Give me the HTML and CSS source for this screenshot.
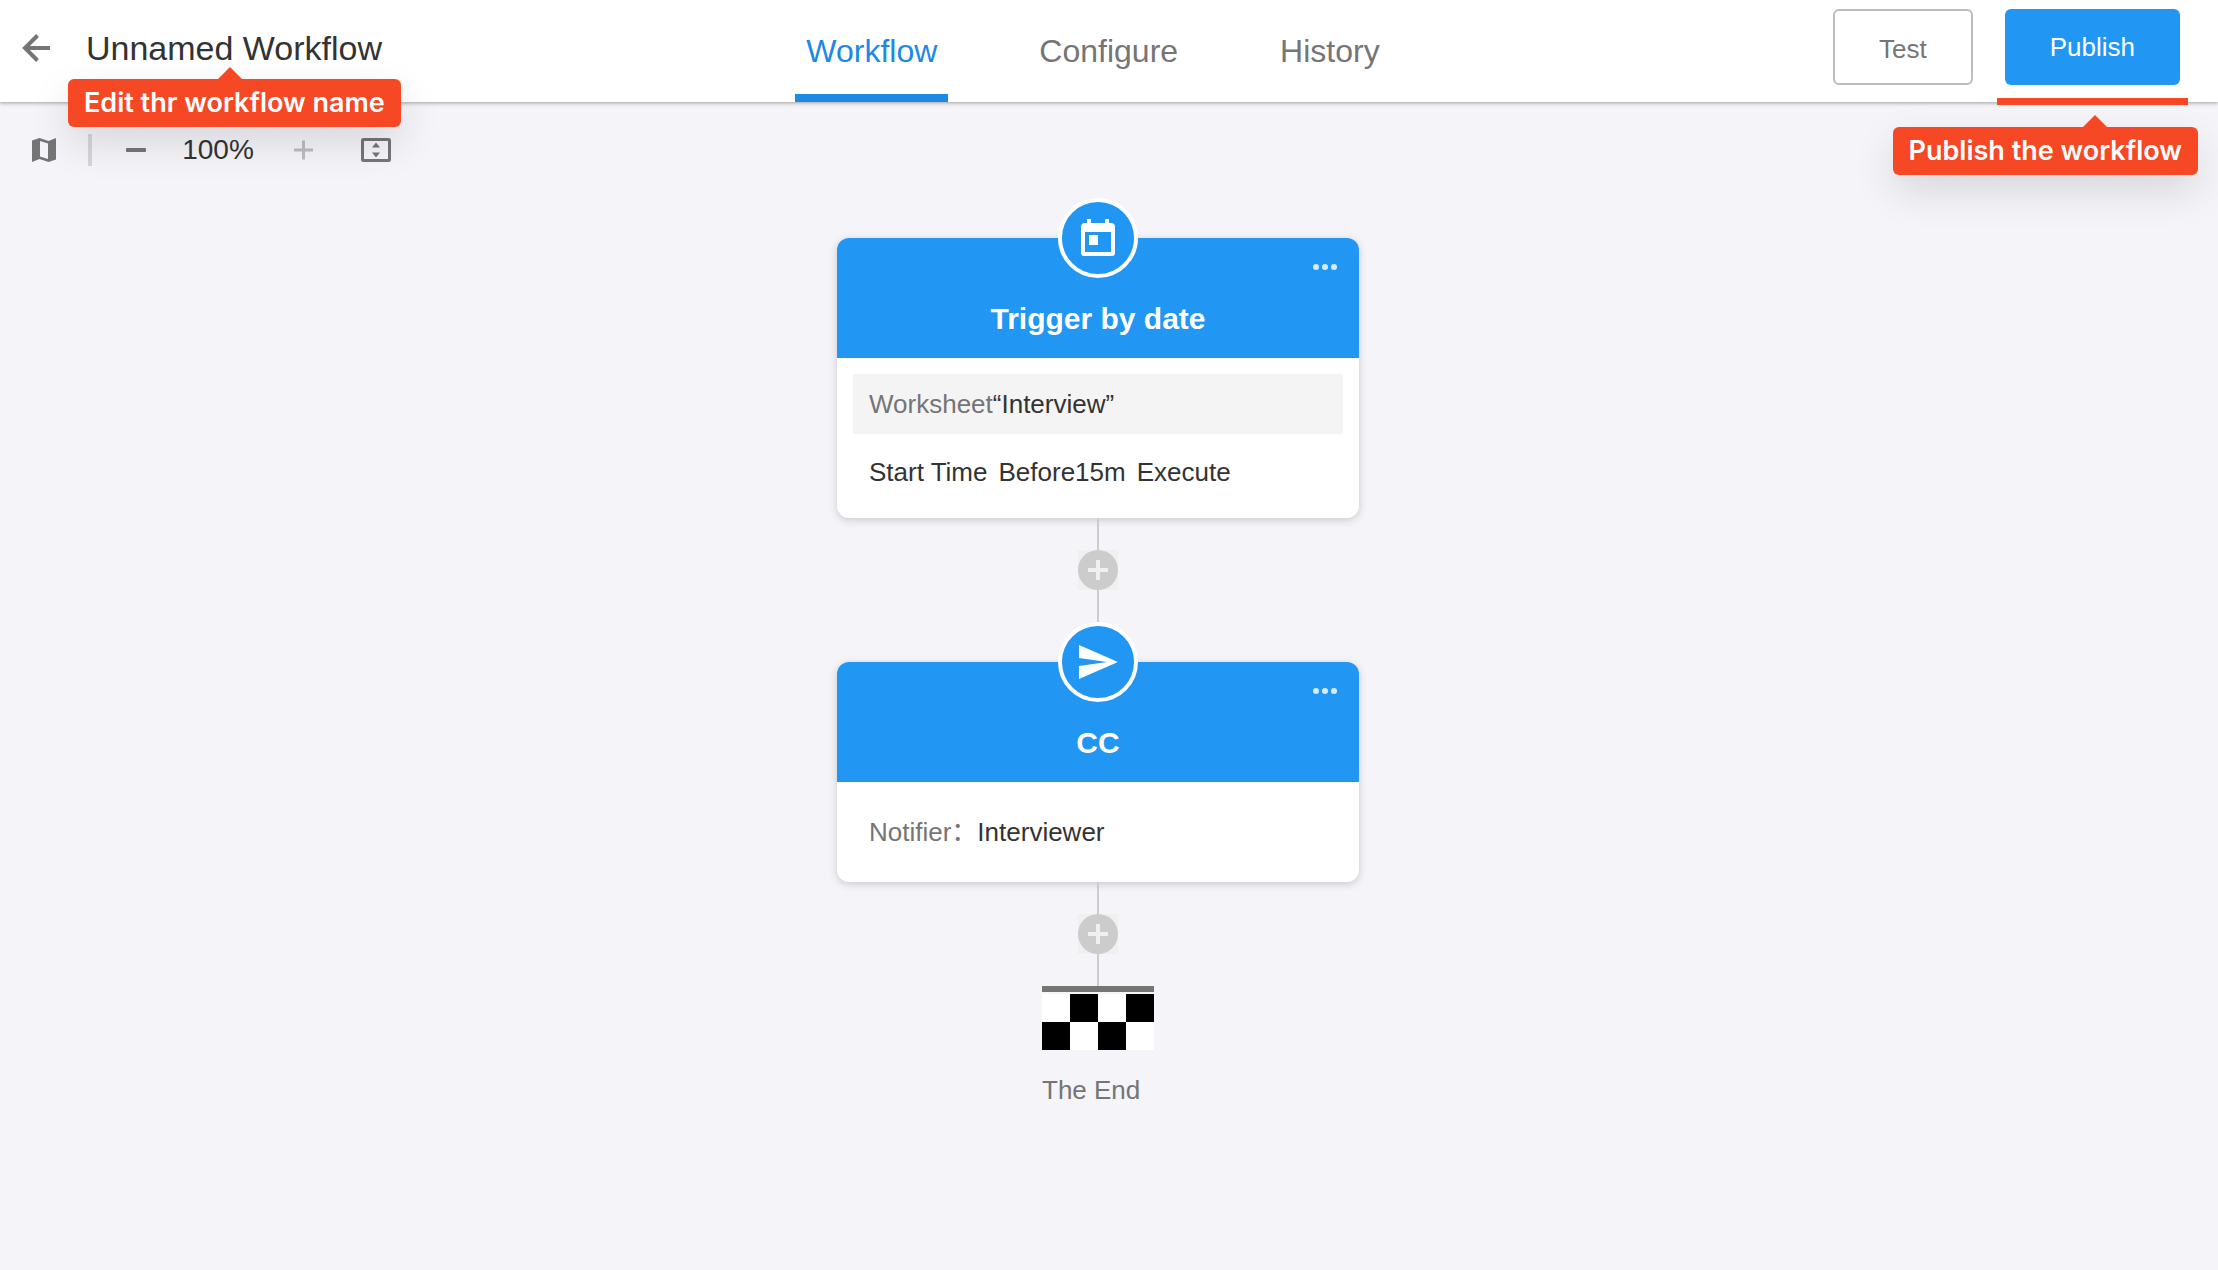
FILE: index.html
```html
<!DOCTYPE html>
<html lang="en">
<head>
<meta charset="utf-8">
<meta name="viewport" content="width=device-width, initial-scale=1">
<title>Unnamed Workflow</title>
<link rel="stylesheet" href="styles.css">
</head>
<body>
<header class="topbar">
  <div class="topbar-left">
    <button class="icon-button back" aria-label="Back">
      <svg width="28" height="28" viewBox="0 0 28 28" fill="none" stroke="currentColor" stroke-width="4"><path d="M28 14H3M15.500 1.500L3 14l12.500 12.500"/></svg>
    </button>
    <div class="title-wrap">
      <h1 class="title">Unnamed Workflow</h1>
      <div class="tip tip-title" role="tooltip">Edit thr workflow name</div>
    </div>
  </div>
  <nav class="tabs">
    <a class="tab active" href="#workflow">Workflow</a>
    <a class="tab" href="#configure">Configure</a>
    <a class="tab" href="#history">History</a>
  </nav>
  <div class="actions">
    <button class="button button-test">Test</button>
    <div class="publish-wrap">
      <button class="button button-publish">Publish</button>
      <div class="publish-mark"></div>
      <div class="tip tip-publish" role="tooltip">Publish the workflow</div>
    </div>
  </div>
</header>

<main class="canvas">
  <div class="toolbar">
    <button class="icon-button" aria-label="Map">
      <svg width="24" height="24" viewBox="0 0 24 24" fill="currentColor" fill-rule="evenodd"><path d="M0 2.500L7.500 0l9 3L24 0v21.500L16.500 24l-9-3L0 24zM8 3v15.500l8 2.500V5.500z"/></svg>
    </button>
    <span class="divider"></span>
    <button class="icon-button zoom-out" aria-label="Zoom out">
      <svg width="20" height="20" viewBox="0 0 20 20" fill="currentColor"><rect y="8" width="20" height="4" rx="1"/></svg>
    </button>
    <span class="zoom-value">100%</span>
    <button class="icon-button zoom-in" aria-label="Zoom in" disabled>
      <svg width="20" height="20" viewBox="0 0 20 20" fill="none" stroke="currentColor" stroke-width="3"><path d="M0 10h19M9.500 0.500v19"/></svg>
    </button>
    <button class="icon-button fit" aria-label="Fit to screen">
      <svg width="30" height="24" viewBox="0 0 30 24"><rect x="1.500" y="1.500" width="27" height="21" rx="1" fill="none" stroke="currentColor" stroke-width="3"/><path d="M15 4.500l4 5h-8zM15 19.500l4-5h-8z" fill="currentColor"/></svg>
    </button>
  </div>

  <div class="flow">
    <section class="card">
      <div class="card-head">
        <span class="badge">
          <svg width="34" height="38" viewBox="0 0 34 38" fill="white" fill-rule="evenodd"><path d="M6 0h4v4h14V0h4v4h2a4 4 0 0 1 4 4v26a3 3 0 0 1-3 3H3a3 3 0 0 1-3-3V8a4 4 0 0 1 4-4h2zM4 13v20h26V13zM8 16h9v10H8z"/></svg>
        </span>
        <button class="more" aria-label="More"><svg width="24" height="6" viewBox="0 0 24 6" fill="currentColor"><circle cx="3" cy="3" r="3"/><circle cx="12" cy="3" r="3"/><circle cx="21" cy="3" r="3"/></svg></button>
        <h2 class="card-title">Trigger by date</h2>
      </div>
      <div class="card-body">
        <p class="line shaded"><span class="muted">Worksheet</span>“Interview”</p>
        <p class="line spaced"><span>Start Time</span><span>Before15m</span><span>Execute</span></p>
      </div>
    </section>

    <div class="link"><button class="add" aria-label="Add node"><svg width="40" height="40" viewBox="0 0 40 40"><circle cx="20" cy="20" r="20" fill="#ccc"/><path d="M10 20h20M20 10v20" stroke="#f0f0f0" stroke-width="4"/></svg></button></div>

    <section class="card after-link">
      <div class="card-head">
        <span class="badge">
          <svg width="40" height="34" viewBox="0 0 40 34" fill="white"><path d="M1 0l39 17L1 34V21l28-4L1 13z"/></svg>
        </span>
        <button class="more" aria-label="More"><svg width="24" height="6" viewBox="0 0 24 6" fill="currentColor"><circle cx="3" cy="3" r="3"/><circle cx="12" cy="3" r="3"/><circle cx="21" cy="3" r="3"/></svg></button>
        <h2 class="card-title">CC</h2>
      </div>
      <div class="card-body">
        <p class="line"><span class="muted">Notifier：</span>Interviewer</p>
      </div>
    </section>

    <div class="link"><button class="add" aria-label="Add node"><svg width="40" height="40" viewBox="0 0 40 40"><circle cx="20" cy="20" r="20" fill="#ccc"/><path d="M10 20h20M20 10v20" stroke="#f0f0f0" stroke-width="4"/></svg></button></div>

    <div class="end">
      <div class="end-bar"></div>
      <svg width="112" height="56" viewBox="0 0 112 56" shape-rendering="crispEdges"><path fill="#fff" d="M0 0h112v56H0z"/><path d="M28 0h28v28H28zM84 0h28v28H84zM0 28h28v28H0zM56 28h28v28H56z"/></svg>
      <p class="end-label">The End</p>
    </div>
  </div>
</main>
</body>
</html>
```

FILE: styles.css
```css
* { box-sizing: border-box; }

body {
  margin: 0;
  min-height: 100vh;
  background: #f4f4f9;
  color: #333;
  font: 26px/32px "Liberation Sans", "Noto Sans CJK SC", sans-serif;
}

h1, h2, p { margin: 0; }
svg { display: block; }

button {
  padding: 0;
  border: 0;
  background: none;
  color: inherit;
  font: inherit;
  cursor: pointer;
}

/* Top bar */
.topbar {
  position: relative;
  z-index: 1;
  display: grid;
  grid-template-columns: 1fr auto 1fr;
  min-height: 102px;
  padding: 0 38px 0 6px;
  background: #fff;
  box-shadow: 0 1px 4px rgba(0, 0, 0, 0.36);
}

.topbar-left {
  display: flex;
  align-items: center;
  gap: 20px;
  padding-bottom: 6px;
}

.icon-button {
  display: flex;
  align-items: center;
  justify-content: center;
  color: #757575;
}

.back { padding: 0 16px; }

.title-wrap, .publish-wrap { position: relative; }

.title {
  font-size: 34px;
  line-height: 40px;
  font-weight: 400;
  white-space: nowrap;
}

.tabs {
  display: flex;
  gap: 80px;
}

.tab {
  display: flex;
  align-items: center;
  padding: 8px 11px 0;
  border-bottom: 8px solid transparent;
  color: #757575;
  font-size: 32px;
  line-height: 40px;
  text-decoration: none;
}

.tab.active {
  border-color: #1e88e5;
  color: #1e88e5;
}

.actions {
  display: flex;
  align-items: center;
  justify-content: flex-end;
  gap: 32px;
  padding-bottom: 8px;
}

.button {
  display: block;
  height: 76px;
  border-radius: 6px;
}

.button-test {
  padding: 4px 44px 0;
  border: 2px solid #bdbdbd;
  color: #757575;
}

.button-publish {
  padding: 0 45px;
  background: #2196f3;
  color: #fff;
}

.publish-mark {
  position: absolute;
  top: 89px;
  left: -8px;
  right: -8px;
  height: 7px;
  background: #f64825;
}

/* Callouts */
.tip {
  position: absolute;
  padding: 8px 16px;
  border-radius: 6px;
  background: #f64825;
  box-shadow: 0 16px 40px rgba(0, 0, 0, 0.12);
  color: #fff;
  font: 600 27px/32px Inter, "Liberation Sans", sans-serif;
  white-space: nowrap;
}

.tip::before {
  content: "";
  position: absolute;
  bottom: 100%;
  border: 12px solid transparent;
  border-top: 0;
  border-bottom-color: #f64825;
}

.tip-title { top: 51px; left: -18px; }
.tip-title::before { left: 150px; }
.tip-publish { top: 118px; right: -18px; }
.tip-publish::before { right: 91px; }

/* Toolbar */
.toolbar {
  display: flex;
  align-items: center;
  gap: 32px;
  padding: 32px;
  padding-bottom: 0;
}

.divider {
  width: 4px;
  height: 32px;
  background: #d6d6d8;
}

.zoom-out { width: 24px; }
.zoom-in { width: 32px; color: #bdbdbd; }
.fit { width: 48px; }

.zoom-value {
  width: 76px;
  font-size: 28px;
  text-align: center;
}

/* Flow */
.flow {
  display: flex;
  flex-direction: column;
  align-items: center;
  padding: 72px 22px 100px 0;
}

.card {
  width: 522px;
  border-radius: 12px;
  background: #fff;
  box-shadow: 0 2px 8px rgba(0, 0, 0, 0.18);
}

.after-link { margin-top: 40px; }

.card-head {
  position: relative;
  min-height: 120px;
  padding-top: 61px;
  border-radius: 12px 12px 0 0;
  background: #2196f3;
  color: #fff;
  text-align: center;
}

.badge {
  position: absolute;
  top: -40px;
  left: calc(50% - 40px);
  display: flex;
  align-items: center;
  justify-content: center;
  width: 80px;
  height: 80px;
  border: 4px solid #fff;
  border-radius: 50%;
  background: #2196f3;
}

.more {
  position: absolute;
  top: 18px;
  right: 14px;
  padding: 8px;
  color: #d8ebfd;
}

.card-title {
  font-size: 30px;
  line-height: 40px;
  font-weight: 700;
}

.card-body {
  display: flex;
  flex-direction: column;
  gap: 8px;
  padding: 16px;
}

.line { padding: 14px 16px; }
.line:only-child { padding: 18px 16px; }
.shaded { background: #f4f4f4; }
.muted { color: #757575; }

.spaced {
  display: flex;
  gap: 11px;
}

.link {
  display: flex;
  flex-direction: column;
  align-items: center;
}

.link::before, .link::after {
  content: "";
  width: 2px;
  height: 32px;
  background: #ccc;
}

.add { background: #f0f0f0; }

.end {
  display: flex;
  flex-direction: column;
  gap: 2px;
}

.end-bar {
  height: 6px;
  background: #757575;
}

.end-label {
  padding-top: 22px;
  color: #757575;
}
```
